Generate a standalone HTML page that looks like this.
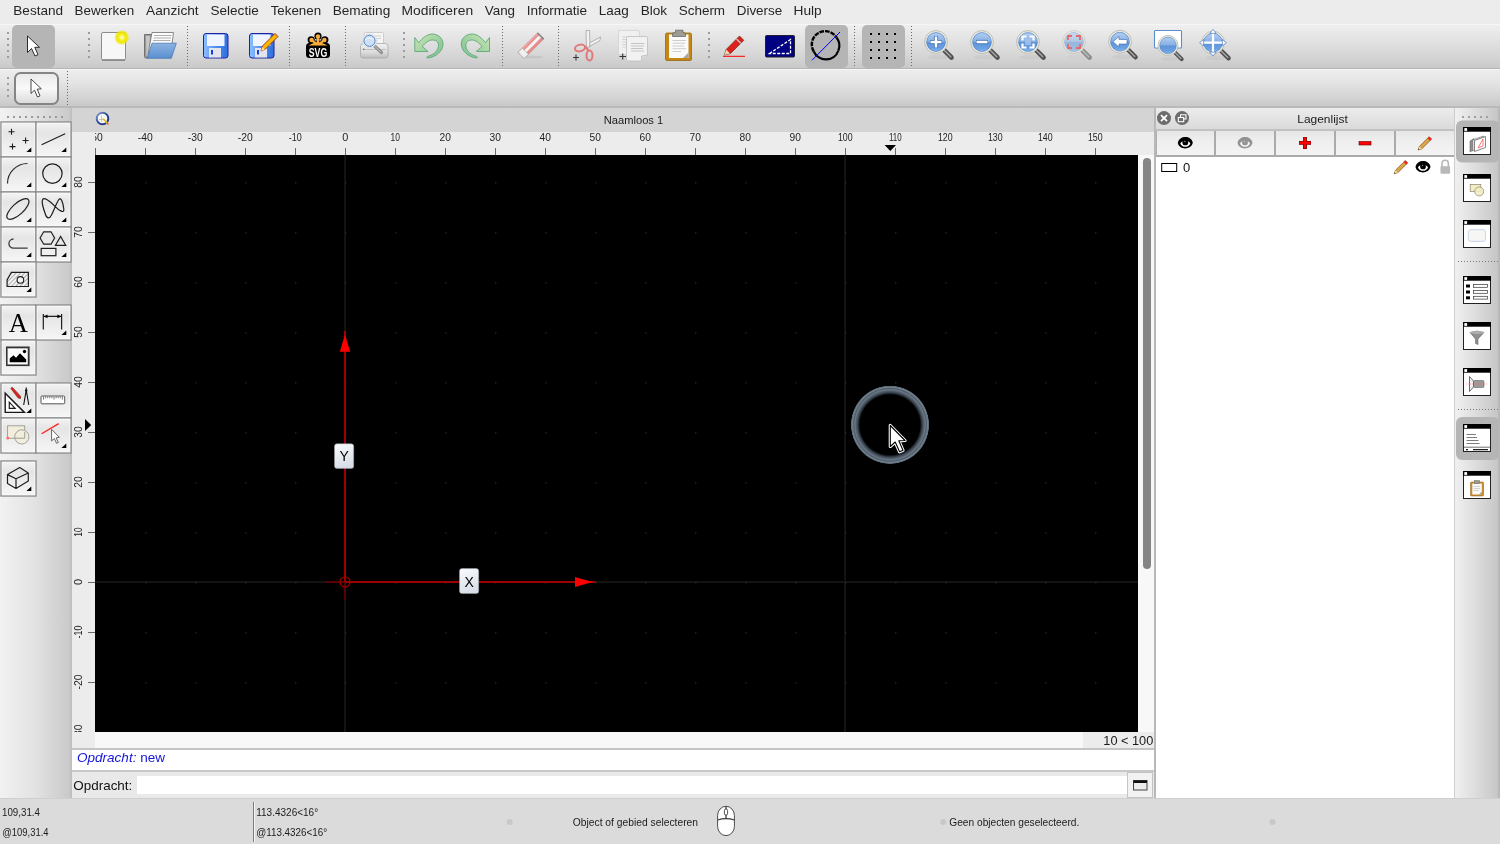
<!DOCTYPE html>
<html><head><meta charset="utf-8">
<style>
*{box-sizing:border-box;margin:0;padding:0}
html,body{width:1500px;height:844px;overflow:hidden;background:#ececec;font-family:"Liberation Sans",sans-serif;color:#222}
.a{position:absolute}
svg{position:absolute;overflow:visible;will-change:transform}
#menu{will-change:transform}
#menu{left:0;top:0;width:1500px;height:24px;background:#ececec}
#menu span{position:absolute;top:3px;font-size:13px;color:#262626;white-space:nowrap}
#tb1{left:0;top:24px;width:1500px;height:45px;background:linear-gradient(#efefef,#e6e6e6 25%,#d6d6d6 70%,#c9c9c9);border-top:1px solid #f6f6f6;border-bottom:1px solid #b6b6b6}
#tb2{left:0;top:69px;width:1500px;height:39px;background:linear-gradient(#ededed,#e4e4e4 35%,#d4d4d4 75%,#c9c9c9);border-top:1px solid #f6f6f6;border-bottom:2px solid #b9b9b9}
.vdots{position:absolute;width:2px;background:repeating-linear-gradient(#8a8a8a 0 1px,transparent 1px 4px)}
.hdl{position:absolute;width:3px;background:repeating-linear-gradient(#9a9a9a 0 2px,transparent 2px 6px)}
#pal{left:0;top:108px;width:72px;height:690px;background:linear-gradient(90deg,#f2f2f2,#e2e2e2 50%,#c9c9c9);border-right:2px solid #c0c0c0}
.tb{position:absolute;width:35px;height:35px;border:1px solid #8d8d8d;background:linear-gradient(#f5f5f5,#e6e6e6 40%,#f3f3f3)}
#win{left:72px;top:108px;width:1082px;height:690px;background:#ececec}
#title{left:72px;top:108px;width:1082px;height:24px;background:#d4d4d4}
#canvas{left:95px;top:155px;width:1043px;height:577px;background:#000;overflow:hidden}
#status{left:0;top:798px;width:1500px;height:46px;background:#dbdbdb;border-top:1px solid #cfcfcf}
#status span{position:absolute;font-size:10px;color:#1e1e1e;white-space:nowrap}
#lp{left:1154px;top:108px;width:300px;height:690px;background:#fff;border-left:2px solid #b6b6b6}
#dock{left:1454px;top:108px;width:46px;height:690px;background:linear-gradient(90deg,#f0f0f0,#dcdcdc 50%,#c6c6c6);border-left:1px solid #cdcdcd;border-right:2px solid #b9b9b9}
</style></head><body>
<div id="menu" class="a"></div>
<svg class="a" style="left:0;top:0" width="900" height="24" viewBox="0 0 900 24" font-size="13" fill="#262626"><text x="13.3" y="15.2" textLength="49.8" lengthAdjust="spacingAndGlyphs">Bestand</text><text x="74.5" y="15.2" textLength="59.6" lengthAdjust="spacingAndGlyphs">Bewerken</text><text x="146.1" y="15.2" textLength="52.6" lengthAdjust="spacingAndGlyphs">Aanzicht</text><text x="210.5" y="15.2" textLength="48.2" lengthAdjust="spacingAndGlyphs">Selectie</text><text x="270.7" y="15.2" textLength="50.4" lengthAdjust="spacingAndGlyphs">Tekenen</text><text x="332.7" y="15.2" textLength="57.6" lengthAdjust="spacingAndGlyphs">Bemating</text><text x="401.5" y="15.2" textLength="71.6" lengthAdjust="spacingAndGlyphs">Modificeren</text><text x="484.7" y="15.2" textLength="30.4" lengthAdjust="spacingAndGlyphs">Vang</text><text x="526.7" y="15.2" textLength="60.4" lengthAdjust="spacingAndGlyphs">Informatie</text><text x="598.7" y="15.2" textLength="30.0" lengthAdjust="spacingAndGlyphs">Laag</text><text x="640.7" y="15.2" textLength="26.4" lengthAdjust="spacingAndGlyphs">Blok</text><text x="678.7" y="15.2" textLength="46.4" lengthAdjust="spacingAndGlyphs">Scherm</text><text x="736.7" y="15.2" textLength="45.6" lengthAdjust="spacingAndGlyphs">Diverse</text><text x="793.5" y="15.2" textLength="28.2" lengthAdjust="spacingAndGlyphs">Hulp</text></svg>
<div id="tb1" class="a"></div>
<div id="tb2" class="a"></div>
<svg class="a" style="left:0;top:0" width="1500" height="110" viewBox="0 0 1500 110">
<defs>
<linearGradient id="gBlue" x1="0" y1="0" x2="0" y2="1"><stop offset="0" stop-color="#b4d0f2"/><stop offset="0.48" stop-color="#86aee4"/><stop offset="0.52" stop-color="#5f93d8"/><stop offset="0.85" stop-color="#6aa2e4"/><stop offset="1" stop-color="#8cbcf0"/></linearGradient>
<linearGradient id="gFloppy" x1="0" y1="0" x2="1" y2="0"><stop offset="0" stop-color="#8ec0ff"/><stop offset="0.5" stop-color="#4f8ff0"/><stop offset="1" stop-color="#2f6fe0"/></linearGradient>
<linearGradient id="gGreen" x1="0" y1="0" x2="1" y2="1"><stop offset="0" stop-color="#c9e6b4"/><stop offset="1" stop-color="#78c08e"/></linearGradient>
<linearGradient id="gFolder" x1="0" y1="0" x2="0" y2="1"><stop offset="0" stop-color="#8db4e2"/><stop offset="1" stop-color="#5a8fd0"/></linearGradient>
<radialGradient id="gGlow"><stop offset="0" stop-color="#ffffff"/><stop offset="0.25" stop-color="#fbf560"/><stop offset="0.55" stop-color="#f2ea00"/><stop offset="0.8" stop-color="#eee600" stop-opacity="0.75"/><stop offset="1" stop-color="#eee600" stop-opacity="0"/></radialGradient>
<symbol id="lens" overflow="visible">
<ellipse cx="3" cy="15" rx="11" ry="2.5" fill="#000" opacity="0.035"/>
<line x1="7.5" y1="7.5" x2="15.5" y2="15.5" stroke="#505050" stroke-width="4.6" stroke-linecap="round"/>
<line x1="8.5" y1="8.5" x2="14.8" y2="14.8" stroke="#a8a8a8" stroke-width="1.4" stroke-linecap="round"/>
<circle r="11.4" fill="#ecece4" stroke="#b8b8ac" stroke-width="0.9"/>
<circle r="9.4" fill="url(#gBlue)" stroke="#4d82c4" stroke-width="0.7"/>
</symbol>
<linearGradient id="gBtn2" x1="0" y1="0" x2="0" y2="1"><stop offset="0" stop-color="#e9e9e9"/><stop offset="0.5" stop-color="#f9f9f9"/><stop offset="1" stop-color="#d9d9d9"/></linearGradient>
</defs>
<!-- handles -->
<g fill="#9c9c9c">
<rect x="7" y="32" width="2" height="2"/><rect x="7" y="38" width="2" height="2"/><rect x="7" y="44" width="2" height="2"/><rect x="7" y="50" width="2" height="2"/><rect x="7" y="56" width="2" height="2"/>
<rect x="88" y="32" width="2" height="2"/><rect x="88" y="38" width="2" height="2"/><rect x="88" y="44" width="2" height="2"/><rect x="88" y="50" width="2" height="2"/><rect x="88" y="56" width="2" height="2"/>
<rect x="403" y="32" width="2" height="2"/><rect x="403" y="38" width="2" height="2"/><rect x="403" y="44" width="2" height="2"/><rect x="403" y="50" width="2" height="2"/><rect x="403" y="56" width="2" height="2"/>
<rect x="708" y="32" width="2" height="2"/><rect x="708" y="38" width="2" height="2"/><rect x="708" y="44" width="2" height="2"/><rect x="708" y="50" width="2" height="2"/><rect x="708" y="56" width="2" height="2"/>
<rect x="7" y="77" width="2" height="2"/><rect x="7" y="83" width="2" height="2"/><rect x="7" y="89" width="2" height="2"/><rect x="7" y="95" width="2" height="2"/>
</g>
<!-- thin separators -->
<g stroke="#6a6a6a" stroke-width="1" stroke-dasharray="1 2">
<line x1="187.5" y1="26" x2="187.5" y2="67"/><line x1="289.5" y1="26" x2="289.5" y2="67"/><line x1="345.5" y1="26" x2="345.5" y2="67"/>
<line x1="502.5" y1="26" x2="502.5" y2="67"/><line x1="558.5" y1="26" x2="558.5" y2="67"/>
<line x1="854.5" y1="26" x2="854.5" y2="67"/><line x1="911.5" y1="26" x2="911.5" y2="67"/>
<line x1="67.5" y1="71" x2="67.5" y2="106"/>
</g>
<!-- selected backgrounds -->
<rect x="12" y="25" width="43" height="43" rx="5" fill="#b5b5b5"/>
<rect x="805" y="25" width="43" height="43" rx="5" fill="#b5b5b5"/>
<rect x="862" y="25" width="43" height="43" rx="5" fill="#b5b5b5"/>
<!-- pointer -->
<path d="M27.5,36 L27.5,52.5 L31.5,48.5 L35,56 L38,54.7 L34.8,47.3 L39.5,47.3 Z" fill="#fff" stroke="#2a2a2a" stroke-width="1" stroke-linejoin="round"/>
<!-- new doc -->
<rect x="101.5" y="32.5" width="24" height="27.5" rx="1.5" fill="#f7f7f7" stroke="#8c8c8c" stroke-width="1"/>
<line x1="102" y1="60" x2="125" y2="60" stroke="#7a7a7a" stroke-width="1.2"/>
<circle cx="121.8" cy="37.5" r="7.6" fill="url(#gGlow)"/>
<!-- open folder -->
<path d="M144.5,34.5 L153,34.5 L152,44 L148,58 L146,58 Q144.5,58 144.5,56.5 Z" fill="#9a9a9a" stroke="#606060" stroke-width="0.8"/>
<path d="M146,36 L150,36 L149,56 L146.5,56 Z" fill="#c8c8c8"/>
<path d="M152,32.5 L173.5,32.5 L172,44 L148,54 Z" fill="#fbfbfb" stroke="#707070" stroke-width="0.8"/>
<path d="M154,35.5 L171.5,35.5 M153.5,38 L171,38 M153,40.5 L170.5,40.5" stroke="#b0b0b0" stroke-width="1.1"/>
<path d="M152,43.2 L176.3,43.2 L171.3,58.3 L147,58.3 Z" fill="url(#gFolder)" stroke="#4a78b4" stroke-width="0.8"/>
<!-- save -->
<rect x="203.5" y="33.5" width="24.5" height="24.5" rx="2.5" fill="url(#gFloppy)" stroke="#2222a0" stroke-width="1"/>
<rect x="207" y="34.5" width="17.5" height="11.5" fill="#f0f4ff"/>
<rect x="209" y="48" width="12" height="9.5" fill="#e4e4ec"/>
<rect x="211" y="50" width="2" height="4.5" fill="#1040e0"/>
<!-- save as -->
<rect x="249.5" y="33.5" width="24.5" height="24.5" rx="2.5" fill="url(#gFloppy)" stroke="#2222a0" stroke-width="1"/>
<rect x="253" y="34.5" width="17.5" height="11.5" fill="#f0f4ff"/>
<rect x="255" y="48" width="12" height="9.5" fill="#e4e4ec"/>
<rect x="257" y="50" width="2" height="4.5" fill="#1040e0"/>
<path d="M261,51 L262.5,46 L275,33.5 L278,36.5 L265.5,49 Z" fill="#f8b800" stroke="#9a2a10" stroke-width="0.9" stroke-linejoin="round"/>
<path d="M261,51 L262.3,47 L264.8,49.5 Z" fill="#f6e0b0"/>
<!-- svg logo -->
<g fill="#000">
<rect x="306" y="43" width="24" height="15" rx="3.5"/>
<circle cx="318" cy="36.2" r="3.6"/><circle cx="311.2" cy="39.8" r="3.6"/><circle cx="324.8" cy="39.8" r="3.6"/>
<path d="M307,44.5 Q318,36 329,44.5 L329,47 L307,47 Z"/>
</g>
<g fill="#f9ad3b">
<circle cx="318" cy="36.4" r="2.2"/><circle cx="311.6" cy="40" r="2.2"/><circle cx="324.4" cy="40" r="2.2"/>
<path d="M308.3,45.6 Q318,39.5 327.7,45.6 Z"/>
<path d="M316.8,37 L319.2,37 L319.2,45 L316.8,45 Z M312.5,39.5 L318.8,44 L317,45.6 L310.8,41 Z M323.5,39.5 L317.2,44 L319,45.6 L325.2,41 Z"/>
</g>
<text x="318" y="56.6" font-family="Liberation Sans" font-weight="bold" font-size="12.5" fill="#fff" text-anchor="middle" textLength="18.5" lengthAdjust="spacingAndGlyphs">SVG</text>
<!-- print preview -->
<linearGradient id="gPrn" x1="0" y1="0" x2="0" y2="1"><stop offset="0" stop-color="#f2f2f2"/><stop offset="0.6" stop-color="#dcdcdc"/><stop offset="1" stop-color="#bcbcbc"/></linearGradient>
<rect x="364.5" y="32.5" width="19" height="14" rx="1" fill="#f6f6f6" stroke="#c4c4c4" stroke-width="0.8"/>
<path d="M367,36 H381 M367,38.5 H381 M367,41 H378" stroke="#d0d0d0" stroke-width="1"/>
<path d="M360.5,46.5 Q360.5,43.5 363.5,43.5 L385,43.5 Q388,43.5 388,46.5 L388,55.5 Q388,58 385.5,58 L363,58 Q360.5,58 360.5,55.5 Z" fill="url(#gPrn)" stroke="#a8a8a8" stroke-width="0.8"/>
<path d="M362.5,49.5 H386" stroke="#b8b8b8" stroke-width="0.8"/>
<circle cx="363.8" cy="49.3" r="0.7" fill="#555"/>
<line x1="374" y1="45.5" x2="381.5" y2="52.5" stroke="#8c8c8c" stroke-width="3.2" stroke-linecap="round"/>
<line x1="374.5" y1="46" x2="381" y2="52" stroke="#c8c8c8" stroke-width="1" stroke-linecap="round"/>
<circle cx="369.5" cy="40.8" r="7" fill="#fafafa" stroke="#d8d8d8" stroke-width="0.8"/>
<circle cx="369.5" cy="40.8" r="5.6" fill="#cfe0f4" stroke="#4b80c8" stroke-width="1"/>
<path d="M365,40 Q369.5,36 374,40" fill="none" stroke="#fff" stroke-width="1" opacity="0.7"/>
<!-- undo -->
<path id="undoP" d="M414.8,37.5 L418.7,42.8 C422,38.5 427,34 432,34 C438,34 443,38 443,44 C443,51 436,57 428,58 C426,58 426.5,56.5 429,56 C435,54 438.5,50 438.5,45 C438.5,42 436,40 432,40 C429,40 425,43 422.3,46.5 L428,51.5 L414.8,51.5 Z" fill="url(#gGreen)" stroke="#5ea879" stroke-width="0.9" stroke-linejoin="round"/>
<g transform="translate(904.3,0) scale(-1,1)"><use href="#undoP"/></g>
<!-- eraser -->
<ellipse cx="532" cy="57" rx="11" ry="1.5" fill="#000" opacity="0.07"/>
<g transform="rotate(-45 531 45.5)">
<rect x="517" y="41.2" width="28" height="8.6" rx="0.8" fill="#e88c8c" stroke="#b86a6a" stroke-width="0.5"/>
<rect x="517" y="44.1" width="28" height="2.9" fill="#f4f4f4"/>
<rect x="517" y="41.2" width="6" height="8.6" fill="#f0f0f0" stroke="#9a9a9a" stroke-width="0.5"/>
<rect x="543.6" y="41.2" width="1.6" height="8.6" fill="#8a8a8a"/>
<rect x="523" y="41.2" width="20.6" height="1.3" fill="#f2a8a8"/>
</g>
<!-- scissors -->
<path d="M586,30.5 L589.5,30.5 L590,47 L586.5,47 Z" fill="#f2f2f2" stroke="#9a9a9a" stroke-width="0.7"/>
<path d="M600.5,37 L600,40.5 L590,46 L589.5,43 Z" fill="#f2f2f2" stroke="#9a9a9a" stroke-width="0.7"/>
<ellipse cx="580" cy="48" rx="5.2" ry="3.2" transform="rotate(-15 580 48)" fill="none" stroke="#e07878" stroke-width="2"/>
<ellipse cx="589.5" cy="55.5" rx="3" ry="5" fill="none" stroke="#e07878" stroke-width="2"/>
<path d="M585,46.5 L588.5,50.5" stroke="#e07878" stroke-width="2"/>
<path d="M573,57.5 L579,57.5 M576,54.5 L576,60.5" stroke="#333" stroke-width="1.1"/>
<!-- copy -->
<path d="M618.5,30.5 L638,30.5 Q639.5,30.5 639.5,32 L639.5,54.5 L618.5,54.5 Z" fill="#f0f0f0" stroke="#d2d2d2" stroke-width="0.8"/>
<path d="M622,37 L627,37 M622,39.5 L627,39.5 M622,42 L627,42 M622,44.5 L627,44.5 M622,47 L627,47" stroke="#d5d5d5" stroke-width="1"/>
<path d="M627.5,36.5 L646.5,36.5 Q647.5,36.5 647.5,37.5 L647.5,55 L641.5,61 L627.5,61 Q626.5,61 626.5,60 L626.5,37.5 Q626.5,36.5 627.5,36.5 Z" fill="#f2f2f2" stroke="#bdbdbd" stroke-width="0.8"/>
<path d="M641.5,61 L641.5,56 L647.5,55" fill="#d8d8d8" stroke="#b0b0b0" stroke-width="0.6"/>
<path d="M631,43.5 L644.5,43.5 M631,46 L644,46 M631,48.5 L643,48.5 M631,51 L644,51" stroke="#c4c4c4" stroke-width="1"/>
<path d="M619.5,56.5 L626,56.5 M622.7,53.5 L622.7,59.5" stroke="#333" stroke-width="1.1"/>
<!-- paste -->
<rect x="665.5" y="33" width="26" height="27.5" rx="1.5" fill="#c58616" stroke="#9a6a10" stroke-width="0.8"/>
<rect x="669" y="34.5" width="19.5" height="23.5" fill="#fafafa"/>
<path d="M683,58 L688.5,58 L688.5,52.5 Z" fill="#a8a8a8"/>
<path d="M672.5,40.5 L686,40.5 M672.5,43.2 L685,43.2 M672.5,46 L684,46 M672.5,48.7 L686,48.7 M672.5,51.5 L681,51.5" stroke="#c8c8c8" stroke-width="0.9"/>
<path d="M675.5,30.2 L683,30.2 L683,32.5 L685.5,33 L685.5,36.5 L672.5,36.5 L672.5,33 L675.5,32.5 Z" fill="#9c9c90" stroke="#606060" stroke-width="0.7"/>
<!-- pen -->
<line x1="723" y1="56.3" x2="745" y2="56.3" stroke="#ff0000" stroke-width="1"/>
<path d="M724.5,55 L726.2,49.5 L739.5,36 L743.8,40.3 L730.5,53.5 Z" fill="#e02020" stroke="#6a3a10" stroke-width="0.8" stroke-linejoin="round"/>
<path d="M724.5,55 L726.2,49.5 L730,53.4 Z" fill="#f0d8b0"/>
<path d="M736.5,39 L740.8,43.3" stroke="#c8c8c8" stroke-width="1.4"/>
<!-- blue box -->
<rect x="765.5" y="35.5" width="29" height="21.5" rx="1" fill="#000080" stroke="#202030" stroke-width="1"/>
<path d="M769.5,53.5 L790.5,39.5 L790.5,53.5 Z" fill="none" stroke="#fff" stroke-width="1.3" stroke-dasharray="3 1.5"/>
<!-- circle -->
<path d="M838.4,50.5 A13.2,13.2 0 0 1 813.8,51.5" fill="none" stroke="#000" stroke-width="2.2"/>
<path d="M836.5,37.5 A13.2,13.2 0 0 1 838.4,50.5" fill="none" stroke="#000" stroke-width="2.2"/>
<path d="M813.8,51.5 A13.2,13.2 0 0 1 836.5,37.5" fill="none" stroke="#000" stroke-width="2.4" stroke-dasharray="4.6 1"/>
<line x1="812" y1="60.3" x2="840" y2="32" stroke="#0000ff" stroke-width="1"/>
<!-- grid -->
<g fill="#000">
<rect x="870" y="33" width="2" height="2"/><rect x="878" y="33" width="2" height="2"/><rect x="886" y="33" width="2" height="2"/><rect x="894" y="33" width="2" height="2"/>
<rect x="870" y="41" width="2" height="2"/><rect x="878" y="41" width="2" height="2"/><rect x="886" y="41" width="2" height="2"/><rect x="894" y="41" width="2" height="2"/>
<rect x="870" y="49" width="2" height="2"/><rect x="878" y="49" width="2" height="2"/><rect x="886" y="49" width="2" height="2"/><rect x="894" y="49" width="2" height="2"/>
<rect x="870" y="57" width="2" height="2"/><rect x="878" y="57" width="2" height="2"/><rect x="886" y="57" width="2" height="2"/><rect x="894" y="57" width="2" height="2"/>
</g>
<!-- zoom in -->
<use href="#lens" x="936" y="42"/>
<path d="M930,42 L942,42 M936,36 L936,48" stroke="#3a6ab0" stroke-width="4.2"/>
<path d="M930.5,42 L941.5,42 M936,36.5 L936,47.5" stroke="#fff" stroke-width="2.6"/>
<!-- zoom out -->
<use href="#lens" x="982" y="42"/>
<path d="M976,42 L988,42" stroke="#3a6ab0" stroke-width="4.2"/>
<path d="M976.5,42 L987.5,42" stroke="#fff" stroke-width="2.6"/>
<!-- zoom auto -->
<use href="#lens" x="1028" y="42"/>
<rect x="1025" y="39" width="6" height="6" fill="#a8c4ea" opacity="0.8"/><path d="M1022.5,40.5 L1022.5,36.5 L1026.5,36.5 M1029.5,36.5 L1033.5,36.5 L1033.5,40.5 M1033.5,43.5 L1033.5,47.5 L1029.5,47.5 M1026.5,47.5 L1022.5,47.5 L1022.5,43.5" fill="none" stroke="#fff" stroke-width="2.2"/>
<!-- zoom sel (faded) -->
<g opacity="0.55"><use href="#lens" x="1074" y="42"/></g>
<path d="M1068,40 L1068,36 L1072,36 M1076,36 L1080,36 L1080,40 M1080,44 L1080,48 L1076,48 M1072,48 L1068,48 L1068,44" fill="none" stroke="#e86868" stroke-width="1.8"/>
<!-- zoom prev -->
<use href="#lens" x="1120" y="41.7"/>
<path d="M1113,41.7 L1119,36.5 L1119,39.5 L1127,39.5 L1127,44 L1119,44 L1119,47 Z" fill="#fff" stroke="#3a6ab0" stroke-width="0.6"/>
<!-- window zoom -->
<rect x="1154.5" y="30.5" width="27" height="17.5" rx="1" fill="#fff" stroke="#5b8fd0" stroke-width="1.1"/>
<use href="#lens" transform="translate(1168,45.5) scale(0.88)"/>
<!-- pan -->
<use href="#lens" x="1213" y="42.7"/>
<path d="M1213,32 L1213,53.5 M1202.5,42.7 L1223.5,42.7" stroke="#fff" stroke-width="2.2"/>
<path d="M1213,29.3 L1209.8,33.3 L1216.2,33.3 Z M1213,56.1 L1209.8,52.1 L1216.2,52.1 Z M1199.6,42.7 L1203.6,39.5 L1203.6,45.9 Z M1226.4,42.7 L1222.4,39.5 L1222.4,45.9 Z" fill="#fff" stroke="#4a7ac0" stroke-width="0.7"/>
<!-- tb2 pointer -->
<rect x="15" y="73" width="43" height="31" rx="5.5" fill="url(#gBtn2)" stroke="#858585" stroke-width="2"/>
<path d="M31,79 L31,93.5 L34.5,90.2 L37.5,97 L40,95.8 L37.2,89.2 L41.3,88.8 Z" fill="#fff" stroke="#333" stroke-width="0.9" stroke-linejoin="round"/>
</svg>

<div id="pal" class="a"></div>
<svg class="a" style="left:0;top:100px" width="72" height="420" viewBox="0 100 72 420">
<defs>
<linearGradient id="gTool" x1="0" y1="0" x2="0" y2="1"><stop offset="0" stop-color="#f4f4f4"/><stop offset="0.3" stop-color="#e5e5e5"/><stop offset="0.75" stop-color="#f0f0f0"/><stop offset="1" stop-color="#f6f6f6"/></linearGradient>
<symbol id="tbtn" overflow="visible"><rect x="0.5" y="0.5" width="35" height="35" fill="url(#gTool)" stroke="#8e8e8e" stroke-width="1.4"/><rect x="1.7" y="1.7" width="32.6" height="32.6" fill="none" stroke="#fafafa" stroke-width="0.8" opacity="0.8"/></symbol>
<symbol id="tri" overflow="visible"><path d="M25.4,30 L30.3,25.5 L30.3,30 Z" fill="#000"/></symbol>
<pattern id="hatch" width="3" height="3" patternUnits="userSpaceOnUse" patternTransform="rotate(-45)"><rect width="3" height="3" fill="#f4f4f4"/><line x1="0" y1="0" x2="3" y2="0" stroke="#707070" stroke-width="1.1"/></pattern>
</defs>
<g fill="#9a9a9a"><rect x="7" y="116" width="2" height="2"/><rect x="13" y="116" width="2" height="2"/><rect x="19" y="116" width="2" height="2"/><rect x="25" y="116" width="2" height="2"/><rect x="31" y="116" width="2" height="2"/><rect x="37" y="116" width="2" height="2"/><rect x="43" y="116" width="2" height="2"/><rect x="49" y="116" width="2" height="2"/><rect x="55" y="116" width="2" height="2"/><rect x="61" y="116" width="2" height="2"/></g>
<use href="#tbtn" x="0.5" y="121.5"/><use href="#tbtn" x="35.5" y="121.5"/>
<use href="#tbtn" x="0.5" y="156.5"/><use href="#tbtn" x="35.5" y="156.5"/>
<use href="#tbtn" x="0.5" y="191.5"/><use href="#tbtn" x="35.5" y="191.5"/>
<use href="#tbtn" x="0.5" y="226.5"/><use href="#tbtn" x="35.5" y="226.5"/>
<use href="#tbtn" x="0.5" y="261.5"/>
<use href="#tbtn" x="0.5" y="304.5"/><use href="#tbtn" x="35.5" y="304.5"/>
<use href="#tbtn" x="0.5" y="339.5"/>
<use href="#tbtn" x="0.5" y="382.5"/><use href="#tbtn" x="35.5" y="382.5"/>
<use href="#tbtn" x="0.5" y="417.5"/><use href="#tbtn" x="35.5" y="417.5"/>
<use href="#tbtn" x="0.5" y="460.5"/>
<!-- triangles -->
<use href="#tri" x="1" y="122"/><use href="#tri" x="36" y="122"/>
<use href="#tri" x="1" y="157"/><use href="#tri" x="36" y="157"/>
<use href="#tri" x="1" y="192"/><use href="#tri" x="36" y="192"/>
<use href="#tri" x="1" y="227"/><use href="#tri" x="36" y="227"/>
<use href="#tri" x="1" y="262"/>
<use href="#tri" x="36" y="305"/>
<use href="#tri" x="1" y="383"/>
<use href="#tri" x="36" y="418"/>
<use href="#tri" x="1" y="461"/>
<g fill="none" stroke="#1e1e1e" stroke-width="1.2">
<!-- points -->
<path d="M8.5,131.7 L14.5,131.7 M11.5,128.7 L11.5,134.7 M22.6,140.5 L28.6,140.5 M25.6,137.5 L25.6,143.5 M9.5,146.6 L15.5,146.6 M12.5,143.6 L12.5,149.6" stroke-width="1.1"/>
<!-- line -->
<path d="M41.6,144.7 L65.1,133.8"/>
<!-- arc -->
<path d="M7.5,183.5 A20,20 0 0 1 27.5,163.5" stroke="#2a2a2a"/>
<!-- circle -->
<circle cx="52.4" cy="173.6" r="9.7"/>
<!-- ellipse -->
<ellipse cx="17.9" cy="209" rx="14" ry="5.6" transform="rotate(-42 17.9 209)"/>
<!-- spline -->
<path d="M42.3,200.5 C43,196 49,200 55.5,206.8 C59,210.5 64.5,214 63.8,209 C63.2,203 61,196 58.5,200 C56.5,203 54,210 51.5,215 C49.5,219 47,219 45.5,214.5 C43.5,209 41.8,203 42.3,200.5 Z"/>
<!-- polyline -->
<path d="M13.5,239 A4.6,4.6 0 0 0 13.5,248.2 L27.7,248.2" stroke="#3a3a3a" stroke-width="1.3"/>
<!-- polygons -->
<path d="M40.1,238 L43.7,231.8 L51,231.8 L54.6,238 L51,244.2 L43.7,244.2 Z"/>
<path d="M55.5,245.3 L60.6,236.5 L65.7,245.3 Z"/>
<rect x="41.2" y="248.4" width="14.7" height="7.3"/>
</g>
<!-- hatch -->
<path d="M7.1,279.9 L11.4,272.3 L28.4,272.3 L28.4,286.5 L7.1,286.5 Z" fill="url(#hatch)" stroke="#1e1e1e" stroke-width="1.2"/>
<circle cx="20.4" cy="279.9" r="3.3" fill="#f4f4f4" stroke="#1e1e1e" stroke-width="1.1"/>
<!-- text A -->
<text x="18.2" y="331.5" font-family="Liberation Serif" font-size="26.5" fill="#000" text-anchor="middle">A</text>
<!-- dim -->
<path d="M43.3,314 L43.3,329.6 M61.6,314 L61.6,329.6 M43.3,316.4 L61.6,316.4" stroke="#1e1e1e" stroke-width="1.2" fill="none"/>
<path d="M43.8,316.4 L47.5,314.6 L47.5,318.2 Z M61.1,316.4 L57.4,314.6 L57.4,318.2 Z" fill="#000"/>
<!-- image -->
<rect x="6.8" y="347.3" width="22" height="18" fill="#fff" stroke="#333" stroke-width="1.6"/>
<rect x="7.8" y="348.3" width="20" height="16" fill="none" stroke="#888" stroke-width="0.5"/>
<path d="M9.7,362.2 L9.7,358.5 L13.5,355.2 L16,357.7 L20,353.2 L26.2,359.5 L26.2,362.2 Z" fill="#000"/>
<circle cx="24.5" cy="351.5" r="1.7" fill="#000"/>
<!-- drafting -->
<path d="M5.2,393.3 L5.2,412.4 L24.4,412.4 Z" fill="#fff" stroke="#1a1a1a" stroke-width="1.4" stroke-linejoin="miter"/>
<path d="M9.3,402.2 L9.3,408.4 L15.1,408.4 Z" fill="#fff" stroke="#1a1a1a" stroke-width="1.2"/>
<path d="M10.8,388.4 L12.2,387.2 L20.5,396.2 L20.5,398.6 L18.2,398 Z" fill="#e02020" stroke="#7a2a10" stroke-width="0.7"/>
<path d="M26.2,387.5 L26.2,390 M26.2,390 L23.7,405 M26.2,390 L28.8,405" stroke="#111" stroke-width="1.1" fill="none"/>
<circle cx="26.2" cy="390.5" r="1.2" fill="#111"/>
<!-- ruler -->
<rect x="41" y="396" width="23.7" height="7.8" rx="1" fill="#fff" stroke="#555" stroke-width="1"/>
<path d="M43.5,396.5 L43.5,399.5 M45.6,396.5 L45.6,398.3 M47.7,396.5 L47.7,398.3 M49.8,396.5 L49.8,398.3 M51.9,396.5 L51.9,398.3 M54,396.5 L54,399.5 M56.1,396.5 L56.1,398.3 M58.2,396.5 L58.2,398.3 M60.3,396.5 L60.3,398.3 M62.4,396.5 L62.4,399.5" stroke="#555" stroke-width="0.8"/>
<!-- modify -->
<rect x="7.6" y="425.8" width="17.1" height="12.4" fill="#f2eddc" stroke="#9a9a90" stroke-width="0.9"/>
<circle cx="21.8" cy="436.9" r="7.1" fill="#f2eddc" fill-opacity="0.85" stroke="#9a9a90" stroke-width="0.9"/>
<path d="M24.7,432 L24.7,438.2 L15,438.2" fill="none" stroke="#9a9a90" stroke-width="0.9"/>
<circle cx="7.8" cy="438.2" r="1.4" fill="#ff6a6a"/>
<!-- select -->
<path d="M41.6,433.8 L58.7,423.6" stroke="#ff2020" stroke-width="1.3"/>
<path d="M51.6,429.3 L51.6,440.9 L54.3,438.5 L56.6,443.3 L58.3,442.5 L56.1,437.9 L59.3,437.3 Z" fill="#fff" stroke="#444" stroke-width="0.8" stroke-linejoin="round"/>
<!-- cube -->
<path d="M19.7,467.6 L7.5,474.6 L16,478.8 L28.3,473 Z M7.5,474.6 L7.5,483.6 L16,488.4 L28.3,481 L28.3,473 M16,478.8 L16,488.4" fill="none" stroke="#1e1e1e" stroke-width="1.2" stroke-linejoin="round"/>
</svg>

<div id="win" class="a"></div>
<div id="title" class="a"></div>
<div id="canvas" class="a"></div>
<svg class="a" style="left:72px;top:108px" width="1082" height="690" viewBox="72 108 1082 690">
<defs>
<clipPath id="cTop"><rect x="95" y="132" width="1059" height="23"/></clipPath>
<clipPath id="cLeft"><rect x="72" y="155" width="23" height="577"/></clipPath>
<clipPath id="cCanvas"><rect x="95" y="155" width="1043" height="577"/></clipPath>
<linearGradient id="gLbl" x1="0" y1="0" x2="0.3" y2="1"><stop offset="0" stop-color="#fbfcfe"/><stop offset="1" stop-color="#d9dfe8"/></linearGradient>
<radialGradient id="gRing" cx="890" cy="424.8" r="39.5" gradientUnits="userSpaceOnUse">
<stop offset="0.76" stop-color="#000"/>
<stop offset="0.82" stop-color="#3a4652"/>
<stop offset="0.86" stop-color="#56616d"/>
<stop offset="0.89" stop-color="#6a7886"/>
<stop offset="0.92" stop-color="#4e5a66"/>
<stop offset="0.95" stop-color="#728290"/>
<stop offset="0.98" stop-color="#5a6874"/>
<stop offset="1" stop-color="#000" stop-opacity="0"/>
</radialGradient>
</defs>
<!-- title -->
<text x="633.5" y="123.9" font-size="11" fill="#1a1a1a" text-anchor="middle" textLength="59.4" lengthAdjust="spacingAndGlyphs">Naamloos 1</text>
<linearGradient id="gQring" x1="0" y1="0" x2="1" y2="1"><stop offset="0" stop-color="#8aa0d0"/><stop offset="0.5" stop-color="#2a4890"/><stop offset="1" stop-color="#1a3480"/></linearGradient>
<circle cx="102.5" cy="118.5" r="5.8" fill="#f8f8f8" stroke="url(#gQring)" stroke-width="2"/>
<path d="M99,119.5 L104,119.5 M101.5,115.5 L101.5,121.5" stroke="#b0a0a0" stroke-width="0.6"/>
<path d="M103,118.5 L107.5,123.5" stroke="#f0c020" stroke-width="1.8"/>
<circle cx="107.8" cy="123.8" r="1" fill="#e06060"/>
<!-- canvas -->
<rect x="95" y="155" width="1043" height="577" fill="#000"/>
<g clip-path="url(#cCanvas)">
<path d="M345,155 V732 M845,155 V732" stroke="#131313" stroke-width="2"/>
<path d="M95,582 H1138" stroke="#131313" stroke-width="2"/>
<path d="M145.2,182.2h1.2v1.2h-1.2z M145.2,232.2h1.2v1.2h-1.2z M145.2,282.2h1.2v1.2h-1.2z M145.2,332.2h1.2v1.2h-1.2z M145.2,382.2h1.2v1.2h-1.2z M145.2,432.2h1.2v1.2h-1.2z M145.2,482.2h1.2v1.2h-1.2z M145.2,532.2h1.2v1.2h-1.2z M145.2,582.2h1.2v1.2h-1.2z M145.2,632.2h1.2v1.2h-1.2z M145.2,682.2h1.2v1.2h-1.2z M195.2,182.2h1.2v1.2h-1.2z M195.2,232.2h1.2v1.2h-1.2z M195.2,282.2h1.2v1.2h-1.2z M195.2,332.2h1.2v1.2h-1.2z M195.2,382.2h1.2v1.2h-1.2z M195.2,432.2h1.2v1.2h-1.2z M195.2,482.2h1.2v1.2h-1.2z M195.2,532.2h1.2v1.2h-1.2z M195.2,582.2h1.2v1.2h-1.2z M195.2,632.2h1.2v1.2h-1.2z M195.2,682.2h1.2v1.2h-1.2z M245.2,182.2h1.2v1.2h-1.2z M245.2,232.2h1.2v1.2h-1.2z M245.2,282.2h1.2v1.2h-1.2z M245.2,332.2h1.2v1.2h-1.2z M245.2,382.2h1.2v1.2h-1.2z M245.2,432.2h1.2v1.2h-1.2z M245.2,482.2h1.2v1.2h-1.2z M245.2,532.2h1.2v1.2h-1.2z M245.2,582.2h1.2v1.2h-1.2z M245.2,632.2h1.2v1.2h-1.2z M245.2,682.2h1.2v1.2h-1.2z M295.2,182.2h1.2v1.2h-1.2z M295.2,232.2h1.2v1.2h-1.2z M295.2,282.2h1.2v1.2h-1.2z M295.2,332.2h1.2v1.2h-1.2z M295.2,382.2h1.2v1.2h-1.2z M295.2,432.2h1.2v1.2h-1.2z M295.2,482.2h1.2v1.2h-1.2z M295.2,532.2h1.2v1.2h-1.2z M295.2,582.2h1.2v1.2h-1.2z M295.2,632.2h1.2v1.2h-1.2z M295.2,682.2h1.2v1.2h-1.2z M345.2,182.2h1.2v1.2h-1.2z M345.2,232.2h1.2v1.2h-1.2z M345.2,282.2h1.2v1.2h-1.2z M345.2,332.2h1.2v1.2h-1.2z M345.2,382.2h1.2v1.2h-1.2z M345.2,432.2h1.2v1.2h-1.2z M345.2,482.2h1.2v1.2h-1.2z M345.2,532.2h1.2v1.2h-1.2z M345.2,582.2h1.2v1.2h-1.2z M345.2,632.2h1.2v1.2h-1.2z M345.2,682.2h1.2v1.2h-1.2z M395.2,182.2h1.2v1.2h-1.2z M395.2,232.2h1.2v1.2h-1.2z M395.2,282.2h1.2v1.2h-1.2z M395.2,332.2h1.2v1.2h-1.2z M395.2,382.2h1.2v1.2h-1.2z M395.2,432.2h1.2v1.2h-1.2z M395.2,482.2h1.2v1.2h-1.2z M395.2,532.2h1.2v1.2h-1.2z M395.2,582.2h1.2v1.2h-1.2z M395.2,632.2h1.2v1.2h-1.2z M395.2,682.2h1.2v1.2h-1.2z M445.2,182.2h1.2v1.2h-1.2z M445.2,232.2h1.2v1.2h-1.2z M445.2,282.2h1.2v1.2h-1.2z M445.2,332.2h1.2v1.2h-1.2z M445.2,382.2h1.2v1.2h-1.2z M445.2,432.2h1.2v1.2h-1.2z M445.2,482.2h1.2v1.2h-1.2z M445.2,532.2h1.2v1.2h-1.2z M445.2,582.2h1.2v1.2h-1.2z M445.2,632.2h1.2v1.2h-1.2z M445.2,682.2h1.2v1.2h-1.2z M495.2,182.2h1.2v1.2h-1.2z M495.2,232.2h1.2v1.2h-1.2z M495.2,282.2h1.2v1.2h-1.2z M495.2,332.2h1.2v1.2h-1.2z M495.2,382.2h1.2v1.2h-1.2z M495.2,432.2h1.2v1.2h-1.2z M495.2,482.2h1.2v1.2h-1.2z M495.2,532.2h1.2v1.2h-1.2z M495.2,582.2h1.2v1.2h-1.2z M495.2,632.2h1.2v1.2h-1.2z M495.2,682.2h1.2v1.2h-1.2z M545.2,182.2h1.2v1.2h-1.2z M545.2,232.2h1.2v1.2h-1.2z M545.2,282.2h1.2v1.2h-1.2z M545.2,332.2h1.2v1.2h-1.2z M545.2,382.2h1.2v1.2h-1.2z M545.2,432.2h1.2v1.2h-1.2z M545.2,482.2h1.2v1.2h-1.2z M545.2,532.2h1.2v1.2h-1.2z M545.2,582.2h1.2v1.2h-1.2z M545.2,632.2h1.2v1.2h-1.2z M545.2,682.2h1.2v1.2h-1.2z M595.2,182.2h1.2v1.2h-1.2z M595.2,232.2h1.2v1.2h-1.2z M595.2,282.2h1.2v1.2h-1.2z M595.2,332.2h1.2v1.2h-1.2z M595.2,382.2h1.2v1.2h-1.2z M595.2,432.2h1.2v1.2h-1.2z M595.2,482.2h1.2v1.2h-1.2z M595.2,532.2h1.2v1.2h-1.2z M595.2,582.2h1.2v1.2h-1.2z M595.2,632.2h1.2v1.2h-1.2z M595.2,682.2h1.2v1.2h-1.2z M645.2,182.2h1.2v1.2h-1.2z M645.2,232.2h1.2v1.2h-1.2z M645.2,282.2h1.2v1.2h-1.2z M645.2,332.2h1.2v1.2h-1.2z M645.2,382.2h1.2v1.2h-1.2z M645.2,432.2h1.2v1.2h-1.2z M645.2,482.2h1.2v1.2h-1.2z M645.2,532.2h1.2v1.2h-1.2z M645.2,582.2h1.2v1.2h-1.2z M645.2,632.2h1.2v1.2h-1.2z M645.2,682.2h1.2v1.2h-1.2z M695.2,182.2h1.2v1.2h-1.2z M695.2,232.2h1.2v1.2h-1.2z M695.2,282.2h1.2v1.2h-1.2z M695.2,332.2h1.2v1.2h-1.2z M695.2,382.2h1.2v1.2h-1.2z M695.2,432.2h1.2v1.2h-1.2z M695.2,482.2h1.2v1.2h-1.2z M695.2,532.2h1.2v1.2h-1.2z M695.2,582.2h1.2v1.2h-1.2z M695.2,632.2h1.2v1.2h-1.2z M695.2,682.2h1.2v1.2h-1.2z M745.2,182.2h1.2v1.2h-1.2z M745.2,232.2h1.2v1.2h-1.2z M745.2,282.2h1.2v1.2h-1.2z M745.2,332.2h1.2v1.2h-1.2z M745.2,382.2h1.2v1.2h-1.2z M745.2,432.2h1.2v1.2h-1.2z M745.2,482.2h1.2v1.2h-1.2z M745.2,532.2h1.2v1.2h-1.2z M745.2,582.2h1.2v1.2h-1.2z M745.2,632.2h1.2v1.2h-1.2z M745.2,682.2h1.2v1.2h-1.2z M795.2,182.2h1.2v1.2h-1.2z M795.2,232.2h1.2v1.2h-1.2z M795.2,282.2h1.2v1.2h-1.2z M795.2,332.2h1.2v1.2h-1.2z M795.2,382.2h1.2v1.2h-1.2z M795.2,432.2h1.2v1.2h-1.2z M795.2,482.2h1.2v1.2h-1.2z M795.2,532.2h1.2v1.2h-1.2z M795.2,582.2h1.2v1.2h-1.2z M795.2,632.2h1.2v1.2h-1.2z M795.2,682.2h1.2v1.2h-1.2z M845.2,182.2h1.2v1.2h-1.2z M845.2,232.2h1.2v1.2h-1.2z M845.2,282.2h1.2v1.2h-1.2z M845.2,332.2h1.2v1.2h-1.2z M845.2,382.2h1.2v1.2h-1.2z M845.2,432.2h1.2v1.2h-1.2z M845.2,482.2h1.2v1.2h-1.2z M845.2,532.2h1.2v1.2h-1.2z M845.2,582.2h1.2v1.2h-1.2z M845.2,632.2h1.2v1.2h-1.2z M845.2,682.2h1.2v1.2h-1.2z M895.2,182.2h1.2v1.2h-1.2z M895.2,232.2h1.2v1.2h-1.2z M895.2,282.2h1.2v1.2h-1.2z M895.2,332.2h1.2v1.2h-1.2z M895.2,382.2h1.2v1.2h-1.2z M895.2,432.2h1.2v1.2h-1.2z M895.2,482.2h1.2v1.2h-1.2z M895.2,532.2h1.2v1.2h-1.2z M895.2,582.2h1.2v1.2h-1.2z M895.2,632.2h1.2v1.2h-1.2z M895.2,682.2h1.2v1.2h-1.2z M945.2,182.2h1.2v1.2h-1.2z M945.2,232.2h1.2v1.2h-1.2z M945.2,282.2h1.2v1.2h-1.2z M945.2,332.2h1.2v1.2h-1.2z M945.2,382.2h1.2v1.2h-1.2z M945.2,432.2h1.2v1.2h-1.2z M945.2,482.2h1.2v1.2h-1.2z M945.2,532.2h1.2v1.2h-1.2z M945.2,582.2h1.2v1.2h-1.2z M945.2,632.2h1.2v1.2h-1.2z M945.2,682.2h1.2v1.2h-1.2z M995.2,182.2h1.2v1.2h-1.2z M995.2,232.2h1.2v1.2h-1.2z M995.2,282.2h1.2v1.2h-1.2z M995.2,332.2h1.2v1.2h-1.2z M995.2,382.2h1.2v1.2h-1.2z M995.2,432.2h1.2v1.2h-1.2z M995.2,482.2h1.2v1.2h-1.2z M995.2,532.2h1.2v1.2h-1.2z M995.2,582.2h1.2v1.2h-1.2z M995.2,632.2h1.2v1.2h-1.2z M995.2,682.2h1.2v1.2h-1.2z M1045.2,182.2h1.2v1.2h-1.2z M1045.2,232.2h1.2v1.2h-1.2z M1045.2,282.2h1.2v1.2h-1.2z M1045.2,332.2h1.2v1.2h-1.2z M1045.2,382.2h1.2v1.2h-1.2z M1045.2,432.2h1.2v1.2h-1.2z M1045.2,482.2h1.2v1.2h-1.2z M1045.2,532.2h1.2v1.2h-1.2z M1045.2,582.2h1.2v1.2h-1.2z M1045.2,632.2h1.2v1.2h-1.2z M1045.2,682.2h1.2v1.2h-1.2z M1095.2,182.2h1.2v1.2h-1.2z M1095.2,232.2h1.2v1.2h-1.2z M1095.2,282.2h1.2v1.2h-1.2z M1095.2,332.2h1.2v1.2h-1.2z M1095.2,382.2h1.2v1.2h-1.2z M1095.2,432.2h1.2v1.2h-1.2z M1095.2,482.2h1.2v1.2h-1.2z M1095.2,532.2h1.2v1.2h-1.2z M1095.2,582.2h1.2v1.2h-1.2z M1095.2,632.2h1.2v1.2h-1.2z M1095.2,682.2h1.2v1.2h-1.2z" fill="#303030"/>
<!-- axes -->
<path d="M345,582 V600" stroke="#5a0000" stroke-width="2"/>
<path d="M325,582 H345" stroke="#5a0000" stroke-width="2"/>
<path d="M345,331 V582" stroke="#9c0000" stroke-width="2"/>
<path d="M345,582 H596" stroke="#9c0000" stroke-width="2"/>
<path d="M345,334.5 L339.8,351.8 L350.2,351.8 Z" fill="#ff0000"/>
<path d="M593,582 L575,577 L575,587 Z" fill="#ff0000"/>
<circle cx="345" cy="582" r="5" fill="none" stroke="#b00000" stroke-width="1.1"/>
<rect x="334.5" y="443.8" width="19.2" height="24.6" rx="2.5" fill="url(#gLbl)" stroke="#9aa0a8" stroke-width="0.5"/>
<text x="344.2" y="461.2" font-size="14" fill="#000" text-anchor="middle">Y</text>
<rect x="459.5" y="568.6" width="19.2" height="24.9" rx="2.5" fill="url(#gLbl)" stroke="#9aa0a8" stroke-width="0.5"/>
<text x="469.1" y="586.6" font-size="14" fill="#000" text-anchor="middle">X</text>
<!-- cursor ring -->
<circle cx="890" cy="424.8" r="39.5" fill="url(#gRing)"/>
<path id="cur" d="M890.3,425.5 L890.3,446.5 L895.2,442 L899.6,451.8 L903,450.3 L898.8,440.8 L905,440.5 Z" fill="#fff" stroke="#fff" stroke-width="3.2" stroke-linejoin="round"/>
<path d="M890.3,425.5 L890.3,446.5 L895.2,442 L899.6,451.8 L903,450.3 L898.8,440.8 L905,440.5 Z" fill="#fff" stroke="#000" stroke-width="1.1" stroke-linejoin="round"/>
</g>
<!-- rulers -->
<g clip-path="url(#cTop)" font-size="10.2" fill="#1e1e1e" text-anchor="middle">
<path d="M95.5,148 L95.5,155 M145.5,148 L145.5,155 M195.5,148 L195.5,155 M245.5,148 L245.5,155 M295.5,148 L295.5,155 M345.5,148 L345.5,155 M395.5,148 L395.5,155 M445.5,148 L445.5,155 M495.5,148 L495.5,155 M545.5,148 L545.5,155 M595.5,148 L595.5,155 M645.5,148 L645.5,155 M695.5,148 L695.5,155 M745.5,148 L745.5,155 M795.5,148 L795.5,155 M845.5,148 L845.5,155 M895.5,148 L895.5,155 M945.5,148 L945.5,155 M995.5,148 L995.5,155 M1045.5,148 L1045.5,155 M1095.5,148 L1095.5,155" stroke="#6a6a6a" stroke-width="1"/>
<text x="95.3" y="141.3" textLength="15.0" lengthAdjust="spacingAndGlyphs">-50</text><text x="145.3" y="141.3" textLength="15.0" lengthAdjust="spacingAndGlyphs">-40</text><text x="195.3" y="141.3" textLength="15.0" lengthAdjust="spacingAndGlyphs">-30</text><text x="245.3" y="141.3" textLength="15.0" lengthAdjust="spacingAndGlyphs">-20</text><text x="295.3" y="141.3" textLength="13.0" lengthAdjust="spacingAndGlyphs">-10</text><text x="345.3" y="141.3" textLength="6.1" lengthAdjust="spacingAndGlyphs">0</text><text x="395.3" y="141.3" textLength="9.4" lengthAdjust="spacingAndGlyphs">10</text><text x="445.3" y="141.3" textLength="11.4" lengthAdjust="spacingAndGlyphs">20</text><text x="495.3" y="141.3" textLength="11.4" lengthAdjust="spacingAndGlyphs">30</text><text x="545.3" y="141.3" textLength="11.4" lengthAdjust="spacingAndGlyphs">40</text><text x="595.3" y="141.3" textLength="11.4" lengthAdjust="spacingAndGlyphs">50</text><text x="645.3" y="141.3" textLength="11.4" lengthAdjust="spacingAndGlyphs">60</text><text x="695.3" y="141.3" textLength="11.4" lengthAdjust="spacingAndGlyphs">70</text><text x="745.3" y="141.3" textLength="11.4" lengthAdjust="spacingAndGlyphs">80</text><text x="795.3" y="141.3" textLength="11.4" lengthAdjust="spacingAndGlyphs">90</text><text x="845.3" y="141.3" textLength="14.7" lengthAdjust="spacingAndGlyphs">100</text><text x="895.3" y="141.3" textLength="12.7" lengthAdjust="spacingAndGlyphs">110</text><text x="945.3" y="141.3" textLength="14.7" lengthAdjust="spacingAndGlyphs">120</text><text x="995.3" y="141.3" textLength="14.7" lengthAdjust="spacingAndGlyphs">130</text><text x="1045.3" y="141.3" textLength="14.7" lengthAdjust="spacingAndGlyphs">140</text><text x="1095.3" y="141.3" textLength="14.7" lengthAdjust="spacingAndGlyphs">150</text>
<path d="M884.6,145 L896,145 L890.3,151 Z" fill="#000"/>
</g>
<g clip-path="url(#cLeft)" font-size="10.2" fill="#1e1e1e" text-anchor="middle">
<path d="M88,182.5 L95,182.5 M88,232.5 L95,232.5 M88,282.5 L95,282.5 M88,332.5 L95,332.5 M88,382.5 L95,382.5 M88,432.5 L95,432.5 M88,482.5 L95,482.5 M88,532.5 L95,532.5 M88,582.5 L95,582.5 M88,632.5 L95,632.5 M88,682.5 L95,682.5 M88,732.5 L95,732.5" stroke="#6a6a6a" stroke-width="1"/>
<text transform="translate(81.5,182) rotate(-90)" x="0" y="0" textLength="11.4" lengthAdjust="spacingAndGlyphs">80</text><text transform="translate(81.5,232) rotate(-90)" x="0" y="0" textLength="11.4" lengthAdjust="spacingAndGlyphs">70</text><text transform="translate(81.5,282) rotate(-90)" x="0" y="0" textLength="11.4" lengthAdjust="spacingAndGlyphs">60</text><text transform="translate(81.5,332) rotate(-90)" x="0" y="0" textLength="11.4" lengthAdjust="spacingAndGlyphs">50</text><text transform="translate(81.5,382) rotate(-90)" x="0" y="0" textLength="11.4" lengthAdjust="spacingAndGlyphs">40</text><text transform="translate(81.5,432) rotate(-90)" x="0" y="0" textLength="11.4" lengthAdjust="spacingAndGlyphs">30</text><text transform="translate(81.5,482) rotate(-90)" x="0" y="0" textLength="11.4" lengthAdjust="spacingAndGlyphs">20</text><text transform="translate(81.5,532) rotate(-90)" x="0" y="0" textLength="9.4" lengthAdjust="spacingAndGlyphs">10</text><text transform="translate(81.5,582) rotate(-90)" x="0" y="0" textLength="6.1" lengthAdjust="spacingAndGlyphs">0</text><text transform="translate(81.5,632) rotate(-90)" x="0" y="0" textLength="13.0" lengthAdjust="spacingAndGlyphs">-10</text><text transform="translate(81.5,682) rotate(-90)" x="0" y="0" textLength="15.0" lengthAdjust="spacingAndGlyphs">-20</text><text transform="translate(81.5,732) rotate(-90)" x="0" y="0" textLength="15.0" lengthAdjust="spacingAndGlyphs">-30</text>
<path d="M85,419 L85,431 L91.2,425 Z" fill="#000"/>
</g>
<!-- scrollbar -->
<rect x="1138" y="155" width="16" height="577" fill="#f8f8f8"/>
<rect x="1143" y="158" width="8" height="411" rx="4" fill="#858585"/>
<!-- bottom strip -->
<rect x="95" y="732" width="1059" height="16" fill="#f8f8f8"/>
<rect x="1083" y="732" width="71" height="16" fill="#ececec"/>
<text x="1153.3" y="745" font-size="13" fill="#1a1a1a" text-anchor="end" textLength="50" lengthAdjust="spacingAndGlyphs">10 &lt; 100</text>
<rect x="72" y="748" width="1082" height="2" fill="#c4c4c4"/>
<rect x="72" y="750" width="1082" height="20" fill="#fff"/>
<text x="77" y="762.4" font-size="13" font-style="italic" fill="#1515d8" textLength="88" lengthAdjust="spacingAndGlyphs">Opdracht: <tspan font-style="normal">new</tspan></text>
<rect x="72" y="770" width="1082" height="2" fill="#c8c8c8"/>
<rect x="72" y="772" width="1082" height="26" fill="#e9e9e9"/>
<text x="73.3" y="790" font-size="13" fill="#111" textLength="59" lengthAdjust="spacingAndGlyphs">Opdracht:</text>
<rect x="137" y="776" width="990" height="18" fill="#fff"/>
<rect x="1127.5" y="772.5" width="25" height="25" fill="#f2f2f2" stroke="#c4c4c4" stroke-width="1"/>
<rect x="1133.5" y="780.5" width="13.5" height="9.5" fill="#eee" stroke="#444" stroke-width="1"/>
<rect x="1133.5" y="780.5" width="13.5" height="2.5" fill="#111"/>
</svg>
<div id="lp" class="a"></div>
<svg class="a" style="left:1154px;top:106px" width="346" height="692" viewBox="1154 106 346 692">
<defs>
<linearGradient id="gLpT" x1="0" y1="0" x2="0" y2="1"><stop offset="0" stop-color="#ececec"/><stop offset="1" stop-color="#dadada"/></linearGradient>
<linearGradient id="gLpB" x1="0" y1="0" x2="0" y2="1"><stop offset="0" stop-color="#e6e6e6"/><stop offset="0.4" stop-color="#eeeeee"/><stop offset="1" stop-color="#f4f4f4"/></linearGradient>
<symbol id="eye" overflow="visible">
<path d="M-7.5,0.4 C-6,-7.4 6,-7.6 7.5,0.2 C6,7.6 -6,7.8 -7.5,0.4 Z" fill="#000"/>
<path d="M-5,0.8 C-3.5,-2.6 3.5,-2.7 5,0.8 C3.4,5.2 -3.4,5.3 -5,0.8 Z" fill="#fff"/>
<circle cx="0" cy="-0.2" r="2.9" fill="#000"/>
<circle cx="-0.5" cy="-1.1" r="0.7" fill="#888"/>
</symbol>
<symbol id="pencil" overflow="visible">
<path d="M0,0 L1.2,-3.6 L11,-13.3 L13.4,-10.9 L3.6,-1.2 Z" fill="#dca548" stroke="#7a4a10" stroke-width="0.7" stroke-linejoin="round"/>
<path d="M0,0 L1.2,-3.6 L3.6,-1.2 Z" fill="#f2dcaa"/>
<path d="M0,0 L0.5,-1.4 L1.4,-0.5 Z" fill="#222"/>
<path d="M9.4,-11.7 L11,-13.3 L13.4,-10.9 L11.8,-9.3 Z" fill="#ee2020"/>
</symbol>
</defs>
<rect x="1154" y="106" width="2" height="692" fill="#b8b8b8"/>
<!-- title -->
<rect x="1156" y="108" width="298" height="21" fill="url(#gLpT)"/>
<rect x="1156" y="129" width="298" height="2" fill="#c2c2c2"/>
<circle cx="1164" cy="118.1" r="7" fill="#6c6c6c"/>
<path d="M1161,115.1 L1167,121.1 M1167,115.1 L1161,121.1" stroke="#fff" stroke-width="1.8"/>
<circle cx="1182" cy="118.1" r="7" fill="#6c6c6c"/>
<rect x="1178.3" y="117.5" width="5.4" height="4.2" fill="none" stroke="#fff" stroke-width="1.1"/>
<path d="M1180.5,117.5 L1180.5,114.8 L1186,114.8 L1186,119 L1183.7,119" fill="none" stroke="#fff" stroke-width="1.1"/>
<text x="1322.5" y="123" font-size="11.5" fill="#1c1c1c" text-anchor="middle" textLength="50.5" lengthAdjust="spacingAndGlyphs">Lagenlijst</text>
<!-- toolbar -->
<rect x="1156" y="131" width="298" height="24" fill="url(#gLpB)"/>
<rect x="1156" y="155" width="298" height="2" fill="#ababab"/>
<rect x="1214" y="131" width="2" height="24" fill="#ababab"/>
<rect x="1274" y="131" width="2" height="24" fill="#ababab"/>
<rect x="1334" y="131" width="2" height="24" fill="#ababab"/>
<rect x="1394" y="131" width="2" height="24" fill="#ababab"/>
<rect x="1156" y="131" width="1" height="24" fill="#b0b0b0"/>
<use href="#eye" x="1185.3" y="142.6"/>
<g opacity="0.38"><use href="#eye" x="1245" y="142.6"/></g>
<path d="M1299,142.9 L1311,142.9 M1305,136.9 L1305,148.9" stroke="#5a0000" stroke-width="3.8"/>
<path d="M1299.3,142.9 L1310.7,142.9 M1305,137.2 L1305,148.6" stroke="#ff0000" stroke-width="2.6"/>
<rect x="1359" y="141.5" width="12" height="3.5" fill="#ff0000" stroke="#6a0000" stroke-width="0.6"/>
<use href="#pencil" x="1418.2" y="150"/>
<!-- list -->
<rect x="1156" y="157" width="298" height="641" fill="#fff"/>
<rect x="1161.7" y="163.5" width="15" height="8" fill="#fff" stroke="#000" stroke-width="1"/>
<text x="1183" y="172" font-size="13" fill="#111">0</text>
<use href="#pencil" x="1394.3" y="173.8"/>
<use href="#eye" x="1423" y="166.6"/>
<path d="M1442,167 L1442,163.5 A3.2,3.2 0 0 1 1448.4,163.5 L1448.4,167" fill="none" stroke="#b8b8b8" stroke-width="1.6"/>
<rect x="1440.5" y="166.3" width="9.6" height="7.5" rx="0.8" fill="#b8b8b8"/>
<rect x="1454" y="108" width="1" height="690" fill="#c4c4c4"/>
</svg>

<div id="dock" class="a"></div>
<svg class="a" style="left:1454px;top:108px" width="46" height="400" viewBox="1454 108 46 400">
<defs>
<symbol id="dwin" overflow="visible">
<rect x="0.5" y="0.5" width="27" height="27" fill="#fff" stroke="#222" stroke-width="1"/>
<rect x="0" y="0" width="28" height="4.7" fill="#000"/>
<rect x="1.3" y="1.1" width="2.8" height="2.8" fill="#fff"/>
</symbol>
</defs>
<g fill="#a0a0a0"><rect x="1462" y="116" width="2" height="2"/><rect x="1468" y="116" width="2" height="2"/><rect x="1474" y="116" width="2" height="2"/><rect x="1480" y="116" width="2" height="2"/><rect x="1486" y="116" width="2" height="2"/></g>
<path d="M1458,261.5 H1499 M1458,409.5 H1499" stroke="#777" stroke-width="1" stroke-dasharray="1 2"/>
<rect x="1456" y="120.5" width="43.5" height="42" rx="6" fill="#b5b5b5"/>
<rect x="1456" y="417" width="43.5" height="43" rx="6" fill="#b5b5b5"/>
<use href="#dwin" x="1463" y="127"/>
<use href="#dwin" x="1463" y="174"/>
<use href="#dwin" x="1463" y="220"/>
<use href="#dwin" x="1463" y="276"/>
<use href="#dwin" x="1463" y="322"/>
<use href="#dwin" x="1463" y="368"/>
<use href="#dwin" x="1463" y="424"/>
<use href="#dwin" x="1463" y="471"/>
<!-- 1 layers -->
<path d="M1470,141 L1474,138.5 L1474,149.5 L1470,152 Z" fill="#909090" stroke="#555" stroke-width="0.5"/>
<path d="M1472.5,140 L1483.5,136 L1483.5,147 L1472.5,151 Z" fill="#ddd" stroke="#666" stroke-width="0.6"/>
<path d="M1474.5,140.5 L1485.5,136.5 L1485.5,147.5 L1474.5,151.5 Z" fill="#fff" stroke="#555" stroke-width="0.7"/>
<path d="M1478,148 L1483,139 L1483,146 Z" fill="none" stroke="#ff4040" stroke-width="0.7"/>
<!-- 2 block -->
<rect x="1470.2" y="184.4" width="10.6" height="7" fill="#f4ecc4" stroke="#8a8470" stroke-width="0.7"/>
<circle cx="1479.2" cy="191.4" r="4.5" fill="#f4ecc4" fill-opacity="0.9" stroke="#8a8470" stroke-width="0.7"/>
<!-- 3 -->
<rect x="1468.3" y="229.7" width="17.2" height="11.7" rx="2.5" fill="#f6f6f4" stroke="#c4d4ea" stroke-width="0.9"/>
<!-- 4 list -->
<g fill="#000"><rect x="1466" y="284.5" width="4" height="3"/><rect x="1466" y="290.5" width="4" height="3"/><rect x="1466" y="296.3" width="4" height="3"/></g>
<g fill="none" stroke="#333" stroke-width="0.7"><rect x="1473.5" y="284.5" width="14" height="2.8"/><rect x="1473.5" y="290.5" width="14" height="2.8"/><rect x="1473.5" y="296.3" width="14" height="2.8"/></g>
<!-- 5 filter -->
<path d="M1470,332.5 Q1477,329.5 1484,332.5 L1478,339 L1478,344.5 L1475.5,343.5 L1475.5,339 Z" fill="#909090" stroke="#555" stroke-width="0.5"/>
<ellipse cx="1477" cy="332.5" rx="7" ry="1.5" fill="#b0b0b0"/>
<!-- 6 screw -->
<path d="M1469.5,376.5 L1473.5,381 L1473.5,387 L1469.5,391.5 Z" fill="#f0f0f0" stroke="#333" stroke-width="0.7"/>
<rect x="1473.5" y="380.5" width="10.5" height="7" rx="1.2" fill="#9a9a9a" stroke="#555" stroke-width="0.5"/>
<path d="M1466,384 H1488" stroke="#ff7070" stroke-width="0.6" stroke-dasharray="1.2 0.8" opacity="0.8"/>
<!-- 7 command -->
<g fill="none" stroke="#5a5a5a" stroke-width="0.8">
<path d="M1466.5,434.5 H1476 M1466.5,437.5 H1477 M1466.5,440.5 H1478.5 M1466.5,443.5 H1479.5"/>
</g>
<path d="M1464,447.2 H1490" stroke="#333" stroke-width="0.7"/>
<path d="M1466,449.6 H1468 M1473,449.6 H1488" stroke="#222" stroke-width="1.1"/>
<!-- 8 clipboard -->
<rect x="1470.5" y="482" width="13" height="14" rx="1" fill="#c98a30" stroke="#8a5a10" stroke-width="0.5"/>
<rect x="1472.3" y="483.5" width="9.5" height="11" fill="#f8f8f8"/>
<path d="M1473.5,486.5 H1480 M1473.5,488.5 H1480 M1473.5,490.5 H1479" stroke="#bbb" stroke-width="0.6"/>
<rect x="1474.5" y="480.5" width="5" height="3" fill="#9a9a90" stroke="#555" stroke-width="0.4"/>
<path d="M1479,494.5 L1481.8,494.5 L1481.8,491.5 Z" fill="#999"/>
</svg>

<div id="status" class="a"></div>
<svg class="a" style="left:0;top:798px" width="1500" height="46" viewBox="0 798 1500 46" font-size="10" fill="#1c1c1c">
<text x="2" y="815.8" textLength="38" lengthAdjust="spacingAndGlyphs">109,31.4</text>
<text x="2.3" y="836" textLength="46.2" lengthAdjust="spacingAndGlyphs">@109,31.4</text>
<path d="M253.5,802 V842" stroke="#7c7c7c" stroke-width="1"/>
<path d="M254.5,802 V842" stroke="#f4f4f4" stroke-width="1"/>
<text x="256.2" y="815.6" textLength="62" lengthAdjust="spacingAndGlyphs">113.4326&lt;16°</text>
<text x="256.2" y="836" textLength="71" lengthAdjust="spacingAndGlyphs">@113.4326&lt;16°</text>
<circle cx="509.7" cy="822" r="3" fill="#c8c8c8"/>
<text x="572.8" y="826" textLength="125.2" lengthAdjust="spacingAndGlyphs">Object of gebied selecteren</text>
<path d="M717.6,815.5 A8.4,9.2 0 0 1 734.4,815.5 L734.4,826.4 A8.4,9.2 0 0 1 717.6,826.4 Z" fill="#fff" stroke="#3a3a3a" stroke-width="0.9"/>
<path d="M717.6,820 Q726,817.3 734.4,820" fill="none" stroke="#3a3a3a" stroke-width="1.3"/>
<rect x="724.4" y="809.2" width="3.2" height="5.8" rx="1.3" fill="#fff" stroke="#3a3a3a" stroke-width="0.9"/>
<path d="M726,806.4 V809 M726,815 V818.3" stroke="#3a3a3a" stroke-width="1.3"/>
<circle cx="943.2" cy="822" r="3" fill="#c8c8c8"/>
<text x="949.3" y="826" textLength="130" lengthAdjust="spacingAndGlyphs">Geen objecten geselecteerd.</text>
<circle cx="1272.5" cy="822" r="3" fill="#c8c8c8"/>
</svg>

</body></html>
